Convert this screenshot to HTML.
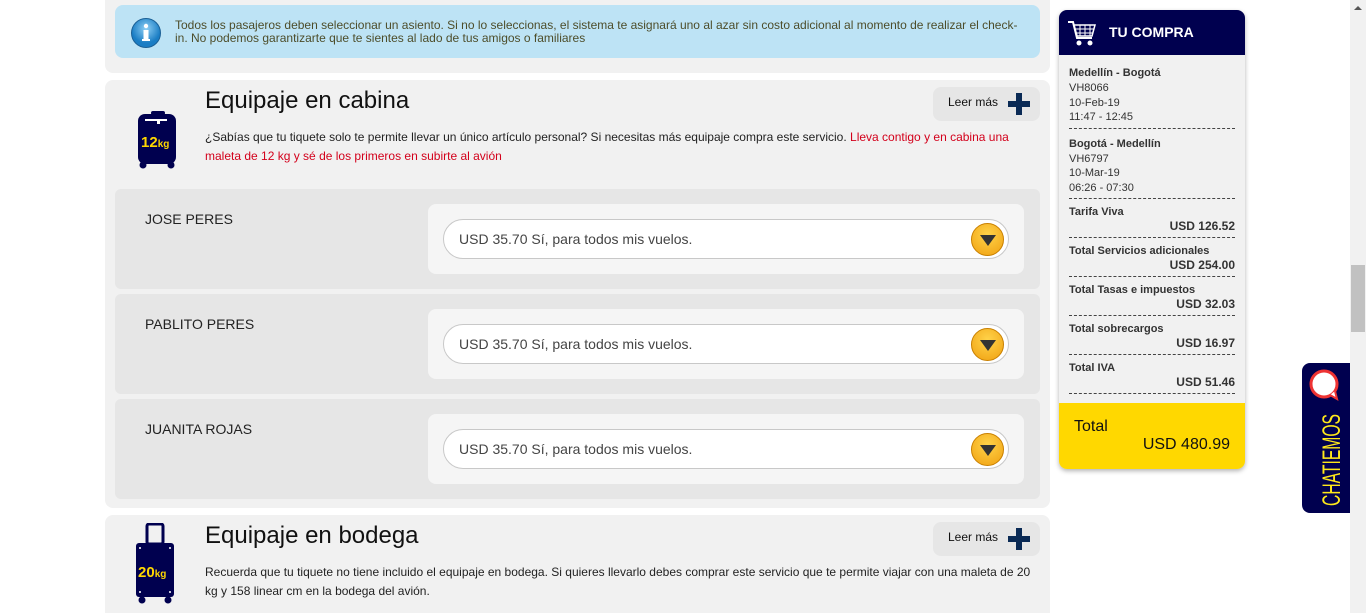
<!DOCTYPE html>
<html style="overflow:hidden"><head><meta charset="utf-8"><style>
*{box-sizing:border-box;margin:0;padding:0}
html,body{width:1366px;height:613px;overflow:hidden}
body{background:#fff;font-family:"Liberation Sans",Arial,sans-serif;position:relative}
.abs{position:absolute}
.card{background:#f1f1f1;border-radius:8px}
.row{background:#e6e6e6;border-radius:6px;left:115px;width:925px;height:100px}
.row .name{position:absolute;left:30px;top:22px;font-size:14px;color:#222}
.row .inner{position:absolute;left:313px;top:15px;width:596px;height:70px;background:#f5f5f5;border-radius:8px}
.sel{position:absolute;left:15px;top:15px;width:566px;height:40px;border:1px solid #c8c8c8;border-radius:20px;background:#fff;font-size:14px;color:#444;padding:11px 0 0 15px}
.btn{position:absolute;right:4px;top:3px;width:33px;height:33px;border-radius:50%;background:radial-gradient(circle at 50% 35%,#ffd34a,#f0a010);border:1px solid #c98000}
.btn:after{content:"";position:absolute;left:8px;top:11px;border-left:8px solid transparent;border-right:8px solid transparent;border-top:11px solid #333}
.leer{position:absolute;background:#e6e6e6;border-radius:8px;width:107px;height:34px;font-size:12px;color:#111;padding:8px 0 0 15px}
.plus{position:absolute;right:10px;top:6px;width:22px;height:22px}
.plus:before{content:"";position:absolute;left:8px;top:0;width:6px;height:22px;background:#0a2a55}
.plus:after{content:"";position:absolute;top:8px;left:0;width:22px;height:6px;background:#0a2a55}
.side{left:1059px;top:10px;width:186px;height:459px;background:#f1f1f1;border-radius:8px;box-shadow:0 2px 5px rgba(0,0,0,.3);overflow:hidden}
.sb{font-size:11px;color:#333;padding:0 10px;line-height:14px}
.sb b{font-weight:bold}
.f{padding-top:11px;line-height:14.5px}
.f b{display:block;line-height:15px}
.p{padding-top:6px}
.dash{border-bottom:1px dashed #444;margin:4px 10px 0}
</style></head><body>
<div class="abs card" style="left:105px;top:-10px;width:945px;height:83px"></div>
<div class="abs" style="left:115px;top:5px;width:925px;height:53px;background:#bde3f5;border-radius:8px"></div>
<svg class="abs" style="left:130px;top:17px" width="32" height="32"><defs><radialGradient id="g" cx="50%" cy="35%"><stop offset="0" stop-color="#8fd0f5"/><stop offset="1" stop-color="#1a7dc4"/></radialGradient></defs><circle cx="16" cy="16" r="14.5" fill="url(#g)" stroke="#1a5f95"/><circle cx="16" cy="9" r="2.2" fill="#fff"/><rect x="13.5" y="13" width="5" height="10" fill="#fff"/><rect x="12" y="22" width="8" height="2" fill="#fff"/></svg>
<div class="abs" style="left:175px;top:19px;width:850px;font-size:12px;line-height:13px;color:#4d4d2a">Todos los pasajeros deben seleccionar un asiento. Si no lo seleccionas, el sistema te asignará uno al azar sin costo adicional al momento de realizar el check-in. No podemos garantizarte que te sientes al lado de tus amigos o familiares</div>

<div class="abs card" style="left:105px;top:80px;width:945px;height:428px"></div>
<svg class="abs" style="left:137px;top:110px" width="40" height="60"><rect x="14" y="1" width="14" height="4" rx="2" fill="#00004f"/><rect x="1" y="4" width="38" height="50" rx="7" fill="#00004f"/><rect x="8" y="9" width="22" height="2" fill="#fff"/><rect x="20" y="11" width="3" height="3" fill="#fff"/><circle cx="6" cy="55" r="3.5" fill="#00004f"/><circle cx="34" cy="55" r="3.5" fill="#00004f"/><text x="4" y="37" font-family="Liberation Sans" font-weight="bold" font-size="15" fill="#ffd800">12<tspan font-size="10">kg</tspan></text></svg>
<div class="abs" style="left:205px;top:87px;font-size:24px;color:#111">Equipaje en cabina</div>
<div class="leer" style="left:933px;top:87px">Leer más<span class="plus"></span></div>
<div class="abs" style="left:205px;top:128px;width:820px;font-size:12px;line-height:19px;color:#222">¿Sabías que tu tiquete solo te permite llevar un único artículo personal? Si necesitas más equipaje compra este servicio. <span style="color:#d3001b">Lleva contigo y en cabina una maleta de 12 kg y sé de los primeros en subirte al avión</span></div>

<div class="abs row" style="top:189px"><div class="name">JOSE PERES</div><div class="inner"><div class="sel">USD 35.70 Sí, para todos mis vuelos.<span class="btn"></span></div></div></div>
<div class="abs row" style="top:294px"><div class="name">PABLITO PERES</div><div class="inner"><div class="sel">USD 35.70 Sí, para todos mis vuelos.<span class="btn"></span></div></div></div>
<div class="abs row" style="top:399px"><div class="name">JUANITA ROJAS</div><div class="inner"><div class="sel">USD 35.70 Sí, para todos mis vuelos.<span class="btn"></span></div></div></div>

<div class="abs card" style="left:105px;top:515px;width:945px;height:120px"></div>
<svg class="abs" style="left:135px;top:523px" width="40" height="82"><rect x="12" y="1" width="16" height="20" rx="2" fill="none" stroke="#00004f" stroke-width="3"/><rect x="1" y="20" width="38" height="54" rx="3" fill="#00004f"/><circle cx="5" cy="25" r="1" fill="#fff"/><circle cx="35" cy="25" r="1" fill="#fff"/><circle cx="5" cy="69" r="1" fill="#fff"/><circle cx="35" cy="69" r="1" fill="#fff"/><circle cx="7" cy="77" r="3.5" fill="#00004f"/><circle cx="33" cy="77" r="3.5" fill="#00004f"/><text x="3" y="54" font-family="Liberation Sans" font-weight="bold" font-size="15" fill="#ffd800">20<tspan font-size="10">kg</tspan></text></svg>
<div class="abs" style="left:205px;top:522px;font-size:24px;color:#111">Equipaje en bodega</div>
<div class="leer" style="left:933px;top:522px">Leer más<span class="plus"></span></div>
<div class="abs" style="left:205px;top:563px;width:830px;font-size:12px;line-height:19px;color:#222">Recuerda que tu tiquete no tiene incluido el equipaje en bodega. Si quieres llevarlo debes comprar este servicio que te permite viajar con una maleta de 20 kg y 158 linear cm en la bodega del avión.</div>

<div class="abs side">
<div style="height:45px;background:#00004f;position:relative">
<svg class="abs" style="left:8px;top:10px" width="30" height="28"><path d="M1 2h5l4 16h15" fill="none" stroke="#fff" stroke-width="2"/><path d="M7 5h21l-3 11H10z" fill="none" stroke="#fff" stroke-width="1.5"/><path d="M8 9h19M9 13h17M13 5v11M18 5v11M23 5v11" stroke="#fff"/><circle cx="12" cy="23" r="2.5" fill="#fff"/><circle cx="23" cy="23" r="2.5" fill="#fff"/></svg>
<div class="abs" style="left:50px;top:14px;color:#fff;font-weight:bold;font-size:14px">TU COMPRA</div></div>
<div class="sb f"><b>Medellín - Bogotá</b>VH8066<br>10-Feb-19<br>11:47 - 12:45</div><div class="dash" style="margin-top:3px"></div>
<div class="sb f" style="padding-top:8px"><b>Bogotá - Medellín</b>VH6797<br>10-Mar-19<br>06:26 - 07:30</div><div class="dash" style="margin-top:3px"></div>
<div class="sb p"><b>Tarifa Viva</b><br><b style="float:right;font-size:12px">USD 126.52</b><br></div><div class="dash"></div>
<div class="sb p"><b>Total Servicios adicionales</b><br><b style="float:right;font-size:12px">USD 254.00</b><br></div><div class="dash"></div>
<div class="sb p"><b>Total Tasas e impuestos</b><br><b style="float:right;font-size:12px">USD 32.03</b><br></div><div class="dash"></div>
<div class="sb p"><b>Total sobrecargos</b><br><b style="float:right;font-size:12px">USD 16.97</b><br></div><div class="dash"></div>
<div class="sb p"><b>Total IVA</b><br><b style="float:right;font-size:12px">USD 51.46</b><br></div><div class="dash"></div>
<div class="abs" style="left:0;top:393px;width:186px;height:66px;background:#ffd800">
<div class="abs" style="left:15px;top:15px;font-size:16px;color:#111">Total</div>
<div class="abs" style="right:15px;top:33px;font-size:16px;color:#111">USD 480.99</div></div>
</div>

<div class="abs" style="left:1302px;top:363px;width:48px;height:150px;background:#00004f;border-radius:8px 0 0 8px"></div>
<svg class="abs" style="left:1302px;top:363px" width="48" height="150"><circle cx="22" cy="21" r="13" fill="#fff" stroke="#e33" stroke-width="3"/><path d="M28 32l7 4-2-8" fill="#fff" stroke="#e33" stroke-width="2"/><text transform="translate(38 143) rotate(-90)" font-family="Liberation Sans" font-size="25" fill="#ffe81a" textLength="92" lengthAdjust="spacingAndGlyphs">CHATIEMOS</text></svg>

<div class="abs" style="left:1350px;top:0;width:16px;height:613px;background:#f1f1f1"></div>
<div class="abs" style="left:1351px;top:265px;width:14px;height:67px;background:#c1c1c1"></div>
<div class="abs" style="left:1354px;top:6px;border-left:4px solid transparent;border-right:4px solid transparent;border-bottom:4px solid #555"></div>
</body></html>
